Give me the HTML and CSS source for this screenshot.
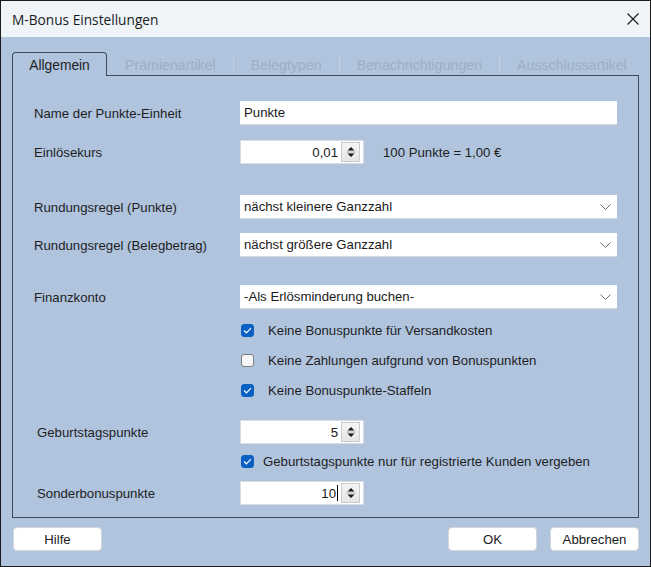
FILE: index.html
```html
<!DOCTYPE html>
<html lang="de">
<head>
<meta charset="utf-8">
<title>M-Bonus Einstellungen</title>
<link rel="stylesheet" href="styles.css">
</head>
<body>
<div class="window">
  <div class="titlebar">
    <span class="title">M-Bonus Einstellungen</span>
    <svg class="close" width="12" height="12" viewBox="0 0 12 12"><path d="M0.5 0.5 L11.5 11.5 M11.5 0.5 L0.5 11.5" stroke="#1a1a1a" stroke-width="1.1" fill="none"/></svg>
  </div>
  <div class="body">
    <div class="tabs">
      <div class="tab active">Allgemein</div>
      <div class="tab-rest">
        <span class="tab t1">Prämienartikel</span>
        <span class="sep"></span>
        <span class="tab">Belegtypen</span>
        <span class="sep"></span>
        <span class="tab">Benachrichtigungen</span>
        <span class="sep"></span>
        <span class="tab">Ausschlussartikel</span>
      </div>
    </div>
    <div class="panel">
      <div class="row r-name">
        <span class="label">Name der Punkte-Einheit</span>
        <div class="input wide">Punkte</div>
      </div>
      <div class="row r-kurs">
        <span class="label">Einlösekurs</span>
        <div class="input spin"><span class="val">0,01</span><span class="spinbtn"><svg width="10" height="16" viewBox="0 0 10 16"><path d="M5 3 L8.5 6.5 L1.5 6.5 Z M1.5 9.5 L8.5 9.5 L5 13 Z" fill="#1a1a1a"/><path d="M0 8 H10" stroke="#b5b5b5" stroke-width="1"/></svg></span></div>
        <span class="note">100 Punkte = 1,00 €</span>
      </div>
      <div class="row r-rund1">
        <span class="label">Rundungsregel (Punkte)</span>
        <div class="input wide select"><span>nächst kleinere Ganzzahl</span><svg class="chev" width="11" height="6" viewBox="0 0 11 6"><path d="M0.5 0.5 L5.5 5.5 L10.5 0.5" stroke="#6b6b6b" stroke-width="1" fill="none"/></svg></div>
      </div>
      <div class="row r-rund2">
        <span class="label">Rundungsregel (Belegbetrag)</span>
        <div class="input wide select"><span>nächst größere Ganzzahl</span><svg class="chev" width="11" height="6" viewBox="0 0 11 6"><path d="M0.5 0.5 L5.5 5.5 L10.5 0.5" stroke="#6b6b6b" stroke-width="1" fill="none"/></svg></div>
      </div>
      <div class="row r-konto">
        <span class="label">Finanzkonto</span>
        <div class="input wide select"><span>-Als Erlösminderung buchen-</span><svg class="chev" width="11" height="6" viewBox="0 0 11 6"><path d="M0.5 0.5 L5.5 5.5 L10.5 0.5" stroke="#6b6b6b" stroke-width="1" fill="none"/></svg></div>
      </div>
      <div class="checks">
        <div class="check"><span class="box on"><svg width="9" height="7" viewBox="0 0 9 7"><path d="M1 3.5 L3.4 5.8 L8 1.2" stroke="#fff" stroke-width="1.2" fill="none"/></svg></span><span class="ctext">Keine Bonuspunkte für Versandkosten</span></div>
        <div class="check"><span class="box"></span><span class="ctext">Keine Zahlungen aufgrund von Bonuspunkten</span></div>
        <div class="check"><span class="box on"><svg width="9" height="7" viewBox="0 0 9 7"><path d="M1 3.5 L3.4 5.8 L8 1.2" stroke="#fff" stroke-width="1.2" fill="none"/></svg></span><span class="ctext">Keine Bonuspunkte-Staffeln</span></div>
      </div>
      <div class="row r-geb">
        <span class="label indent">Geburtstagspunkte</span>
        <div class="input spin"><span class="val">5</span><span class="spinbtn"><svg width="10" height="16" viewBox="0 0 10 16"><path d="M5 3 L8.5 6.5 L1.5 6.5 Z M1.5 9.5 L8.5 9.5 L5 13 Z" fill="#1a1a1a"/><path d="M0 8 H10" stroke="#b5b5b5" stroke-width="1"/></svg></span></div>
      </div>
      <div class="row r-gebcheck">
        <span class="label"></span>
        <div class="check tight"><span class="box on"><svg width="9" height="7" viewBox="0 0 9 7"><path d="M1 3.5 L3.4 5.8 L8 1.2" stroke="#fff" stroke-width="1.2" fill="none"/></svg></span><span class="ctext">Geburtstagspunkte nur für registrierte Kunden vergeben</span></div>
      </div>
      <div class="row r-sonder">
        <span class="label indent">Sonderbonuspunkte</span>
        <div class="input spin"><span class="val">10<span class="caret"></span></span><span class="spinbtn"><svg width="10" height="16" viewBox="0 0 10 16"><path d="M5 3 L8.5 6.5 L1.5 6.5 Z M1.5 9.5 L8.5 9.5 L5 13 Z" fill="#1a1a1a"/><path d="M0 8 H10" stroke="#b5b5b5" stroke-width="1"/></svg></span></div>
      </div>
    </div>
    <div class="footer">
      <button class="btn">Hilfe</button>
      <div class="spacer"></div>
      <button class="btn">OK</button>
      <button class="btn">Abbrechen</button>
    </div>
  </div>
</div>
</body>
</html>
```
FILE: styles.css
```css
* { box-sizing: border-box; }
html, body { margin: 0; padding: 0; }
body {
  width: 651px;
  height: 567px;
  font-family: "Liberation Sans", Arial, sans-serif;
  font-size: 13.2px;
  color: #1e1e1e;
}
.window {
  width: 651px;
  height: 567px;
  border: 1px solid #1c1c1c;
  background: #b0c4de;
  display: flex;
  flex-direction: column;
}
.titlebar {
  height: 36px;
  background: #eff4f9;
  display: flex;
  align-items: center;
  justify-content: space-between;
  padding: 0 11px 0 11px;
}
.title {
  font-family: "Open Sans", "Noto Sans", sans-serif;
  font-size: 13.7px;
  color: #1a1a1a;
}
.close { display: block; }
.body {
  flex: 1;
  display: flex;
  flex-direction: column;
  padding: 15px 11px 0 11px;
}
.tabs {
  display: flex;
  height: 24px;
  width: 627px;
}
.tab {
  font-size: 14.2px;
  color: #a0adbf;
  white-space: nowrap;
}
.tab.active {
  width: 95px;
  height: 24px;
  border: 1px solid #3d4b60;
  border-bottom: none;
  border-radius: 4px 4px 0 0;
  color: #1e1e1e;
  font-size: 13.8px;
  display: flex;
  align-items: center;
  justify-content: center;
  padding-top: 2px;
}
.tab-rest {
  flex: 1;
  display: flex;
  align-items: center;
  gap: 17px;
  padding-left: 18px;
  padding-top: 2px;
  border-bottom: 1px solid #3d4b60;
}
.sep {
  width: 1px;
  height: 17px;
  background: #c3d0e2;
}
.panel {
  width: 627px;
  height: 442px;
  border: 1px solid #3d4b60;
  border-top: none;
  padding: 25px 0 0 21px;
  display: flex;
  flex-direction: column;
}
.row {
  display: flex;
  align-items: center;
  height: 24px;
}
.label {
  width: 206px;
  flex: none;
  white-space: nowrap;
}
.label.indent { padding-left: 3px; }
.input {
  height: 24px;
  background: #fff;
  border-bottom: 1px solid #d6dbe2;
  display: flex;
  align-items: center;
  padding: 0 4px;
  font-size: 13.2px;
  color: #1a1a1a;
  white-space: nowrap;
}
.input.wide { width: 377px; }
.input.select { justify-content: space-between; padding-right: 6px; }
.chev { display: block; }
.input.spin {
  width: 124px;
  justify-content: flex-end;
  padding-right: 3px;
  border: 1px solid #d8dde4;
}
.val { margin-right: 3px; display: flex; align-items: center; }
.caret {
  display: inline-block;
  width: 1px;
  height: 16px;
  background: #000;
  margin-left: 1px;
}
.spinbtn {
  width: 19px;
  height: 20px;
  background: linear-gradient(#f4f4f4, #e6e6e6);
  border: 1px solid #cbcbcb;
  display: flex;
  align-items: center;
  justify-content: center;
}
.spinbtn svg { display: block; }
.note { margin-left: 19px; white-space: nowrap; }
.r-kurs { margin-top: 15px; }
.r-rund1 { margin-top: 31px; }
.r-rund2 { margin-top: 14px; }
.r-konto { margin-top: 28px; }
.checks {
  margin-top: 6px;
  padding-left: 206px;
  display: flex;
  flex-direction: column;
}
.check {
  height: 30px;
  display: flex;
  align-items: center;
  white-space: nowrap;
}
.check.tight { height: 24px; }
.box {
  width: 13px;
  height: 13px;
  margin-left: 1px;
  border-radius: 3px;
  border: 1px solid #7a7f87;
  background: #f7f7f7;
  display: flex;
  align-items: center;
  justify-content: center;
  flex: none;
}
.box.on {
  background: #0a5fc2;
  border-color: #0a5fc2;
}
.box svg { display: block; }
.ctext { margin-left: 14px; }
.check.tight .ctext { margin-left: 9px; }
.r-geb { margin-top: 15px; }
.r-gebcheck { margin-top: 5px; }
.r-sonder { margin-top: 8px; }
.footer {
  display: flex;
  margin-top: 9px;
}
.spacer { flex: 1; }
.btn {
  width: 89px;
  height: 24px;
  background: #fff;
  border: 1px solid #d3d7dc;
  border-radius: 4px;
  font-family: "Liberation Sans", Arial, sans-serif;
  font-size: 13.2px;
  color: #1a1a1a;
  padding: 0;
  margin: 0;
}
.btn:first-child { margin-left: 1px; }
.btn + .btn { margin-left: 13px; }
```
